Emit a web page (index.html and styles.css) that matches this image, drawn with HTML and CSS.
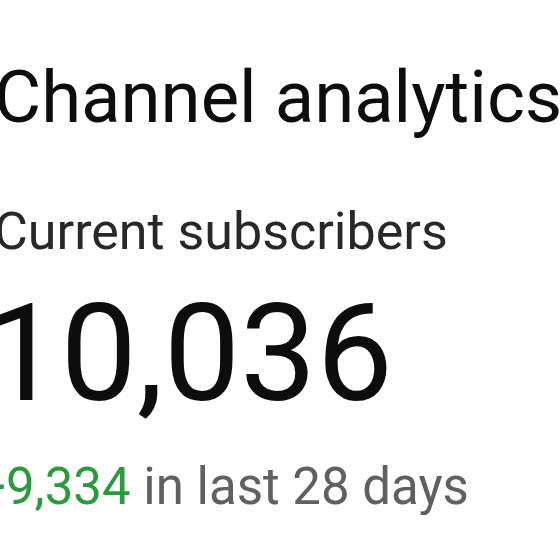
FILE: index.html
```html
<!DOCTYPE html>
<html lang="en">
<head>
    <meta charset="UTF-8">
    <meta name="viewport" content="width=device-width, initial-scale=1.0">
    <title>Channel analytics</title>
    <link rel="stylesheet" href="styles.css">
</head>
<body>
    <div class="analytics">
        <h1 class="analytics-title">Channel analytics</h1>
        <div class="subscribers-card">
            <p class="card-label">Current subscribers</p>
            <p class="card-value">10,036</p>
            <p class="card-delta"><span class="delta-up">+9,334</span> in last 28 days</p>
        </div>
    </div>
</body>
</html>
```

FILE: styles.css
```css
body {
    margin: 0;
    padding: 0;
    background: #ffffff;
    font-family: 'Roboto', 'Noto Sans', sans-serif;
    overflow: hidden;
}

.analytics {
    padding-top: 58px;
    margin-left: -6px;
    white-space: nowrap;
}

.analytics-title {
    margin: 0;
    font-size: 72.5px;
    line-height: 80px;
    font-weight: 400;
    color: #0d0d0d;
}

.subscribers-card {
    margin-top: 64px;
}

p {
    margin: 0;
}

.card-label {
    font-size: 52px;
    line-height: 60px;
    color: #282828;
}

.card-value {
    margin-top: 22px;
    margin-left: -10px;
    font-size: 136px;
    line-height: 140px;
    color: #0d0d0d;
}

.card-delta {
    margin-top: 35px;
    margin-left: -17px;
    font-size: 51px;
    line-height: 56px;
    color: #606060;
}

.delta-up {
    color: #2a9a3e;
}
```
